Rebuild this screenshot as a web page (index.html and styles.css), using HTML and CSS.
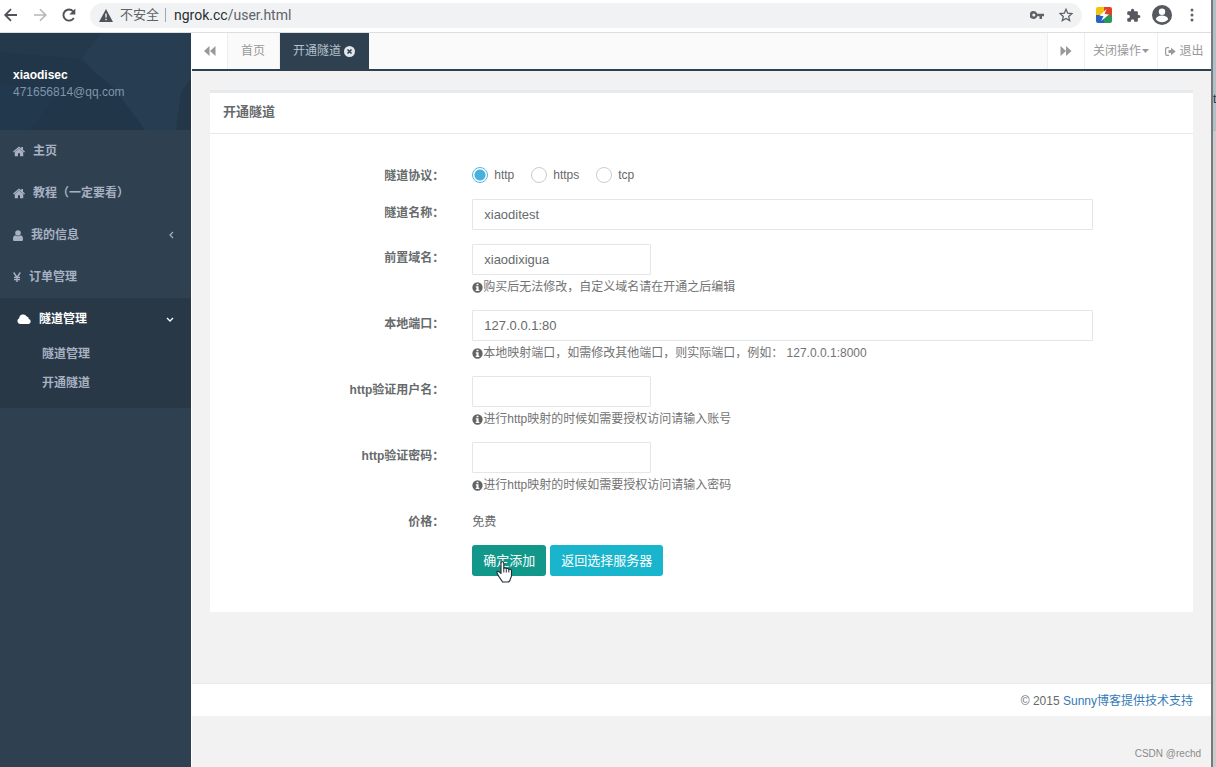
FILE: index.html
```html
<!DOCTYPE html>
<html lang="zh-CN">
<head>
<meta charset="utf-8">
<title>开通隧道</title>
<link rel="stylesheet" href="styles.css">
</head>
<body>
<svg class="defs" aria-hidden="true">
  <symbol id="home" viewBox="0 0 24 22"><path d="M12 5 3.500 12v8.500h6.500v-6h4v6h6.500V12z"/><path d="M12 .8 0 11l1.700 1.900L12 4.300l10.300 8.600L24 11l-4-3.400V2h-3.500v2.700z"/></symbol>
  <symbol id="info" viewBox="0 0 16 16"><path fill-rule="evenodd" d="M8 .5a7.500 7.500 0 1 0 0 15 7.500 7.500 0 0 0 0-15zM6.600 2.600h2.800v2.200H6.600zM5.500 6.200h4v5h1.200V13H5.400v-1.800h1.200V8H5.500z"/></symbol>
</svg>
<div class="screen">
  <div class="browser">
    <header class="toolbar">
      <button class="tool back" aria-label="后退"><svg width="16" height="16" viewBox="0 0 16 16" fill="none" stroke="#4f5357" stroke-width="1.800"><path d="M14 8H2.500M8 2.200 2.200 8 8 13.800"/></svg></button>
      <button class="tool" aria-label="前进"><svg width="16" height="16" viewBox="0 0 16 16" fill="none" stroke="#b4b6b8" stroke-width="1.600"><path d="M2 8h11.500M8 2.200 13.800 8 8 13.800"/></svg></button>
      <button class="tool" aria-label="刷新"><svg width="16" height="16" viewBox="0 0 16 16"><path d="M12.800 11A5.600 5.600 0 1 1 12.200 4.300" fill="none" stroke="#4f5357" stroke-width="1.900"/><path d="M14.300 1.500v6H8.300z" fill="#4f5357"/></svg></button>
      <div class="address">
        <svg width="14" height="13" viewBox="0 0 14 13"><path fill="#505458" fill-rule="evenodd" d="M7 0 14 13H0zM6.300 4.500v4h1.400v-4zm0 5.200v1.500h1.400V9.700z"/></svg>
        <span class="unsafe">不安全</span>
        <span class="url">ngrok.cc<span class="path">/user.html</span></span>
        <svg class="key" width="14" height="8" viewBox="0 0 14 8"><path fill="#5f6368" fill-rule="evenodd" d="M3.800 0a4 4 0 1 0 3.500 5.300H9.500V8H12V5.300h2V2.700H7.300A4 4 0 0 0 3.800 0zm0 2.500a1.500 1.500 0 1 1 0 3 1.500 1.500 0 0 1 0-3z"/></svg>
        <svg width="14" height="14" viewBox="0 0 14 14"><path d="M7 1.300 8.700 5.200l4.200.4-3.200 2.800 1 4.200L7 10.400l-3.700 2.200 1-4.200L1.100 5.600l4.200-.4z" fill="none" stroke="#5f6368" stroke-width="1.300"/></svg>
      </div>
      <svg class="ext" width="16" height="16" viewBox="0 0 16 16"><clipPath id="r"><rect width="16" height="16" rx="2"/></clipPath><g clip-path="url(#r)"><path fill="#f5c20c" d="M0 0h8v8H0z"/><path fill="#e34127" d="M8 0h8v8H8z"/><path fill="#2763c4" d="M0 8h8v8H0z"/><path fill="#299a55" d="M8 8h8v8H8z"/><path fill="#fff" d="M10.500 2 3.500 8.800l4 .2-2.200 5L13 7.500l-4.300-.6z"/></g></svg>
      <svg class="puzzle" width="15" height="15" viewBox="0 0 24 24"><path fill="#55595e" d="M20.500 11H19V7a2 2 0 0 0-2-2h-4V3.500a2.500 2.500 0 0 0-5 0V5H4a2 2 0 0 0-2 2v3.800h1.500a2.700 2.700 0 0 1 0 5.400H2V20a2 2 0 0 0 2 2h3.800v-1.500a2.700 2.700 0 0 1 5.400 0V22H17a2 2 0 0 0 2-2v-4h1.500a2.500 2.500 0 0 0 0-5z"/></svg>
      <svg class="user" width="20" height="20" viewBox="0 0 20 20"><circle cx="10" cy="10" r="10" fill="#55595f"/><circle cx="10" cy="6.800" r="3.200" fill="#fff"/><path fill="#fff" d="M3.800 14.300c1-5 11.400-5 12.400 0-2.800 4-9.600 4-12.400 0z"/></svg>
      <svg width="4" height="14" viewBox="0 0 4 14" fill="#5f6368"><circle cx="2" cy="2" r="1.500"/><circle cx="2" cy="7" r="1.500"/><circle cx="2" cy="12" r="1.500"/></svg>
    </header>
    <div class="app">
      <aside class="sidebar">
        <div class="profile">
          <svg class="facets" viewBox="0 0 191 97" preserveAspectRatio="none" aria-hidden="true"><path fill="#25394c" d="M0 0h191v97H0z"/><path fill="#263d52" d="M101 0h90v50l-12 47h-34L82 25z"/><path fill="#223649" d="M0 19 79 26l36 30 30 41H0z"/><path fill="#21384d" d="M0 50l60 8-30 39H0z"/><path fill="#233748" d="m191 45-10 15-5 37h15z"/></svg>
          <strong>xiaodisec</strong><span>471656814@qq.com</span>
        </div>
        <nav>
          <a class="item" href="#"><svg width="12" height="11"><use href="#home"/></svg><span>主页</span></a>
          <a class="item" href="#"><svg width="12" height="11"><use href="#home"/></svg><span>教程（一定要看）</span></a>
          <a class="item" href="#"><svg width="10" height="11" viewBox="0 0 10 11"><circle cx="5" cy="3" r="2.800"/><path d="M2.200 5.200C0 5.800 0 8 0 9.500 0 10.500.7 11 1.500 11h7c.8 0 1.500-.5 1.500-1.500C10 8 10 5.800 7.800 5.200 6.300 6.600 3.700 6.600 2.200 5.200z"/></svg><span>我的信息</span><svg class="arrow" width="5" height="8" viewBox="0 0 5 8"><path d="M4 1 1 4l3 3" fill="none" stroke="#a7b1c2" stroke-width="1.200"/></svg></a>
          <a class="item" href="#"><svg width="8" height="10" viewBox="0 0 8 10"><path d="m.7.500 3.300 5 3.300-5M4 5v5M1 5.500h6M1 7.600h6" fill="none" stroke="#a7b1c2" stroke-width="1.400"/></svg><span>订单管理</span></a>
          <div class="group">
            <a class="item open" href="#"><svg width="14" height="10" viewBox="0 0 14 10"><path d="M3 10a3 3 0 0 1-.8-5.700A4 4 0 0 1 9.700 2.500a2.500 2.500 0 0 1 2.100 2.600A2.500 2.500 0 0 1 11.500 10z"/></svg><span>隧道管理</span><svg class="arrow" width="8" height="5" viewBox="0 0 8 5"><path d="m1 1 3 3 3-3" fill="none" stroke="#fff" stroke-width="1.300"/></svg></a>
            <a class="sub" href="#">隧道管理</a>
            <a class="sub" href="#">开通隧道</a>
          </div>
        </nav>
      </aside>
      <main class="main">
        <div class="tabs">
          <button class="roll" aria-label="左移"><svg width="12" height="10" viewBox="0 0 12 10"><path d="M5.500 0v10L0 5zM11.500 0v10L6 5z"/></svg></button>
          <button class="tab">首页</button>
          <button class="tab active">开通隧道<svg width="11" height="11" viewBox="0 0 11 11"><circle cx="5.500" cy="5.500" r="5.500" fill="#e2e6ea"/><path d="m3.500 3.500 4 4m0-4-4 4" stroke="#2f4050" stroke-width="1.600"/></svg></button>
          <button class="roll right" aria-label="右移"><svg width="12" height="10" viewBox="0 0 12 10"><path d="M.5 0v10L6 5zM6 0v10l5.500-5z"/></svg></button>
          <button class="close-menu">关闭操作<svg width="7" height="4" viewBox="0 0 7 4"><path d="M0 0h7L3.500 4z"/></svg></button>
          <button class="logout"><svg width="11" height="9" viewBox="0 0 11 9"><path d="M4 .6H2Q.6.600.6 2v5Q.6 8.400 2 8.400h2" fill="none" stroke="#999" stroke-width="1.200"/><path d="M3.500 3H6V.7l4.700 3.800L6 8.300V6H3.500z"/></svg>退出</button>
        </div>
        <section class="panel">
          <h1>开通隧道</h1>
          <form>
            <div class="row"><span class="label">隧道协议：</span>
              <div class="radios">
                <label><input type="radio" name="proto" checked>http</label>
                <label><input type="radio" name="proto">https</label>
                <label><input type="radio" name="proto">tcp</label>
              </div></div>
            <div class="row"><label class="label" for="name">隧道名称：</label><div class="field"><input class="text" id="name" value="xiaoditest"></div></div>
            <div class="row"><label class="label" for="domain">前置域名：</label><div class="field"><input class="text short" id="domain" value="xiaodixigua"><p class="hint"><svg width="11" height="11"><use href="#info"/></svg>购买后无法修改，自定义域名请在开通之后编辑</p></div></div>
            <div class="row"><label class="label" for="port">本地端口：</label><div class="field"><input class="text" id="port" value="127.0.0.1:80"><p class="hint"><svg width="11" height="11"><use href="#info"/></svg>本地映射端口，如需修改其他端口，则实际端口，例如： 127.0.0.1:8000</p></div></div>
            <div class="row"><label class="label" for="huser">http验证用户名：</label><div class="field"><input class="text short" id="huser"><p class="hint"><svg width="11" height="11"><use href="#info"/></svg>进行http映射的时候如需要授权访问请输入账号</p></div></div>
            <div class="row"><label class="label" for="hpass">http验证密码：</label><div class="field"><input class="text short" id="hpass" type="password"><p class="hint"><svg width="11" height="11"><use href="#info"/></svg>进行http映射的时候如需要授权访问请输入密码</p></div></div>
            <div class="row"><span class="label">价格：</span><div class="price">免费</div></div>
            <div class="row"><span></span><div class="actions">
              <button class="btn ok" type="button">确定添加</button>
              <button class="btn alt" type="button">返回选择服务器</button>
              <svg class="cursor" width="17" height="22" viewBox="0 0 17 22"><path fill="#fff" stroke="#222b33" stroke-width="1.100" stroke-linejoin="round" d="M5 12.500V2.300C5 .3 7.800.3 7.800 2.300v5.200c.4-1 2.400-.8 2.500.5.500-.9 2.300-.6 2.500.6.700-.8 2.700-.4 2.700 1.400v4.500c0 2-1.500 3-1.500 5L12.500 21h-6c-.7-2-3-4-4.200-6.500C1.600 13 .8 12 .8 11c.5-1.200 2.400-.8 4.200 1.500z"/><path d="M7.800 7.500v4M10.300 8.500v3M12.800 9v2.500" stroke="#222b33" stroke-width="1"/></svg>
            </div></div>
          </form>
        </section>
        <footer class="footer">© 2015 <a href="#">Sunny博客提供技术支持</a></footer>
      </main>
    </div>
  </div>
  <div class="behind"><div class="behind-top">t</div></div>
  <div class="watermark">CSDN @rechd</div>
</div>
</body>
</html>
```
FILE: styles.css
```css
* { box-sizing: border-box; }
body { margin: 0; font: 12px/17px "Liberation Sans", "Noto Sans CJK SC", sans-serif; color: #676a6c; }
button { font: inherit; color: inherit; border: 0; background: none; padding: 0; margin: 0; }
a { color: inherit; text-decoration: none; }
svg { flex: none; }
.defs { display: none; }
.screen { position: relative; display: flex; min-height: 100vh; }
.browser { flex: 1; min-width: 0; display: flex; flex-direction: column; }

.toolbar { display: flex; align-items: center; height: 33px; padding: 0 17px 2px 3px; border-bottom: 1px solid #dcdee0; background: #fff; }
.tool { display: flex; width: 16px; margin-right: 13px; }
.address { flex: 1; display: flex; align-items: center; height: 25px; padding: 0 9px 0 9px; border-radius: 13px; background: #f0f2f4; }
.unsafe { margin-left: 7px; padding-right: 6px; border-right: 1px solid #a4a7aa; font-size: 13px; line-height: 14px; color: #5f6368; }
.url { flex: 1; margin-left: 8px; font: 14px/18px Roboto, sans-serif; color: #2b2e31; }
.path { color: #5f6368; }
.key { margin-right: 15px; }
.ext { margin-left: 14px; }
.puzzle { margin: 0 11px 0 14px; }
.user { margin-right: 18px; }

.app { flex: 1; display: flex; }
.sidebar { width: 191px; flex: none; background: #2f4050; color: #a7b1c2; font-weight: bold; }
.profile { position: relative; display: flex; flex-direction: column; height: 97px; padding: 34px 13px 0; font-weight: normal; color: #8095a8; }
.profile strong, .profile span { position: relative; }
.profile strong { color: #fff; }
.facets { position: absolute; inset: 0; width: 100%; height: 100%; }
.item { display: flex; align-items: center; gap: 8px; height: 42px; padding: 0 17px 0 13px; fill: #a7b1c2; }
.arrow { margin-left: auto; }
.group { height: 110px; background: #293846; }
.open { padding-left: 17px; color: #fff; fill: #fff; }
.sub { display: block; height: 29px; padding: 6px 0 0 42px; }

.main { flex: 1; min-width: 0; border-left: 1px solid #fff; background: #f2f2f2; }
.tabs { display: flex; height: 38px; border-bottom: 2px solid #2f4050; background: #fafafa; color: #999; fill: #999; }
.tabs button { display: flex; align-items: center; justify-content: center; border-right: 1px solid #eee; }
.tabs .roll { width: 36px; background: #fff; }
.tabs .tab { padding: 0 14px 0 13px; }
.tabs .active { gap: 3px; border: 0; background: #2f4050; color: #b5c0ce; }
.tabs .right { width: 38px; margin-left: auto; border-left: 1px solid #eee; }
.tabs .close-menu { width: 73px; gap: 1px; background: #fff; }
.tabs .logout { width: 53px; gap: 3px; border: 0; background: #fff; }

.panel { margin: 19px 18px 71px; border-top: 3px solid #e7eaec; background: #fff; }
h1 { margin: 0; height: 41px; padding: 10px 13px; border-bottom: 1px solid #e7eaec; font-size: 13px; line-height: 17px; }
form { display: grid; gap: 14px; padding: 28px 5px 36px; }
.row { display: grid; grid-template-columns: 3fr 8fr 1fr; }
.row > * { padding: 0 14px; }
.row .label { padding-top: 6px; text-align: right; font-weight: bold; }
.radios { display: flex; gap: 17px; }
.radios label { display: flex; align-items: center; gap: 6px; padding-top: 3px; }
.radios input { appearance: none; width: 16px; height: 16px; margin: 0; border: 1px solid #ccc; border-radius: 50%; background: #fff; }
.radios input:checked { border-color: #55b5dc; background: radial-gradient(circle, #48b0dc 0 5px, #fff 6px); }
.text { display: block; width: 100%; height: 31px; padding: 0 11px; border: 1px solid #e5e6e7; border-radius: 1px; background: #fff; font: 13px/17px "Liberation Sans", sans-serif; color: #676a6c; }
.short { width: 179px; }
.hint { display: flex; align-items: center; height: 17px; margin: 4px 0 0; color: #737373; fill: #606366; line-height: 19px; white-space: pre; }
.row .price { padding-top: 6px; }
.actions { position: relative; display: flex; gap: 4px; }
.btn { height: 31px; padding: 0 11px; border-radius: 3px; color: #fff; font-size: 13px; }
.ok { background: #12988a; }
.alt { background: #18b5cd; }
.cursor { position: absolute; left: 38px; top: 16px; }

.footer { height: 33px; padding: 9px 18px 0; border-top: 1px solid #e7eaec; background: #fff; text-align: right; }
.footer a { color: #337ab7; }
.behind { width: 5px; flex: none; overflow: hidden; border-left: 2px solid #77797b; background: #cbcbcb; }
.behind-top { height: 131px; padding-top: 91px; background: #afc0c8; color: #26343e; }
.watermark { position: absolute; right: 15px; bottom: 5px; font-size: 10px; color: #8a8a8a; }
```
